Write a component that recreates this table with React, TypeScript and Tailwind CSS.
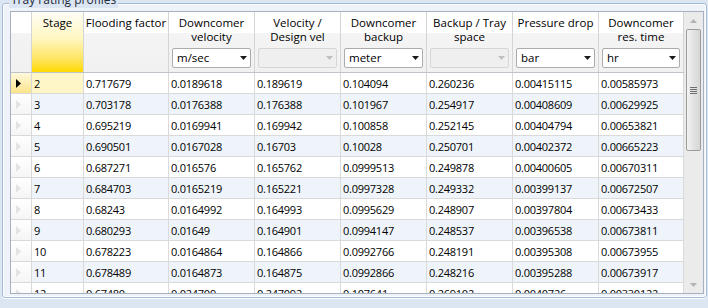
import React from 'react';

const rows: string[][] = [
  ['2', '0.717679', '0.0189618', '0.189619', '0.104094', '0.260236', '0.00415115', '0.00585973'],
  ['3', '0.703178', '0.0176388', '0.176388', '0.101967', '0.254917', '0.00408609', '0.00629925'],
  ['4', '0.695219', '0.0169941', '0.169942', '0.100858', '0.252145', '0.00404794', '0.00653821'],
  ['5', '0.690501', '0.0167028', '0.16703', '0.10028', '0.250701', '0.00402372', '0.00665223'],
  ['6', '0.687271', '0.016576', '0.165762', '0.0999513', '0.249878', '0.00400605', '0.00670311'],
  ['7', '0.684703', '0.0165219', '0.165221', '0.0997328', '0.249332', '0.00399137', '0.00672507'],
  ['8', '0.68243', '0.0164992', '0.164993', '0.0995629', '0.248907', '0.00397804', '0.00673433'],
  ['9', '0.680293', '0.01649', '0.164901', '0.0994147', '0.248537', '0.00396538', '0.00673811'],
  ['10', '0.678223', '0.0164864', '0.164866', '0.0992766', '0.248191', '0.00395308', '0.00673955'],
  ['11', '0.678489', '0.0164873', '0.164875', '0.0992866', '0.248216', '0.00395288', '0.00673917'],
  ['12', '0.67480', '0.024709', '0.247092', '0.107641', '0.269102', '0.0040726', '0.00330122'],
];

type Col = { title: string[]; combo?: string; disabled?: boolean; stage?: boolean };

const cols: Col[] = [
  { title: ['Stage'], stage: true },
  { title: ['Flooding factor'] },
  { title: ['Downcomer', 'velocity'], combo: 'm/sec' },
  { title: ['Velocity /', 'Design vel'], disabled: true },
  { title: ['Downcomer', 'backup'], combo: 'meter' },
  { title: ['Backup / Tray', 'space'], disabled: true },
  { title: ['Pressure drop'], combo: 'bar' },
  { title: ['Downcomer', 'res. time'], combo: 'hr' },
];

const gridCols = 'grid grid-cols-[21px_52px_85px_86px_86px_86px_86px_86px_85px]';

function Combo({ value, disabled }: { value?: string; disabled?: boolean }) {
  return (
    <div
      className={`mx-[3px] mb-[4px] mt-auto flex h-[20px] items-center rounded-[2px] border ${
        disabled ? 'border-[#d6d6d6] bg-[#efefef]' : 'border-[#acacac] bg-white'
      }`}
    >
      <span className="flex-1 pl-[4px] text-left text-[11.5px] leading-[18px] text-black">{value}</span>
      <svg width="7" height="4" viewBox="0 0 7 4" className="mr-[3px]">
        <path d="M0 0H7L3.5 4Z" fill={disabled ? '#c0c0c0' : '#1a1a1a'} />
      </svg>
    </div>
  );
}

function RowArrow({ active }: { active: boolean }) {
  return (
    <svg width="5" height="9" viewBox="0 0 5 9" className="ml-[5px]">
      <path d="M0 0L5 4.5L0 9Z" fill={active ? '#000' : '#e3e3e3'} />
    </svg>
  );
}

export default function App() {
  return (
    <div className="relative h-[308px] w-[708px] overflow-hidden bg-[#dbe6f2] pt-[3px] font-['Open_Sans',sans-serif] text-black">
      <div className="relative ml-[2px] h-[295px] w-[705px] rounded-[3px] border border-[#a3bbd6] bg-[#eef3f9] pl-[7px] pr-[2px] pt-[7px] pb-[3px] shadow-[inset_0_0_0_1px_#ffffff,0_1px_0_#ffffff]">
        <span className="absolute left-[6px] top-[-12px] bg-[#dbe6f2] px-[2px] text-[12px] leading-[16px] text-[#1e2a3d]">
          Tray rating profiles
        </span>
        <div className="flex h-[283px] w-[694px] border border-[#a5b1c0] bg-white">
          <div className="flex w-[673px] flex-col">
            <div className={`${gridCols} h-[61px] border-b border-[#bfc4cb]`}>
              <div className="h-[60px] border-r border-[#d5d5d5] bg-[linear-gradient(to_bottom,#ffffff_0%,#ffffff_35%,#f3f3f3_36%,#f1f1f1_100%)]" />
              {cols.map((c, i) => (
                <div
                  key={i}
                  className={`flex h-[60px] flex-col border-r border-[#d5d5d5] pt-[4px] text-center text-[11.5px] leading-[14px] ${
                    c.stage
                      ? 'bg-[linear-gradient(to_bottom,#fffef6_0%,#fff6c0_45%,#ffe45a_80%,#ffd800_100%)]'
                      : 'bg-[linear-gradient(to_bottom,#ffffff_0%,#ffffff_35%,#f4f4f4_36%,#f1f1f1_100%)]'
                  }`}
                >
                  {c.title.map((t, j) => (
                    <div key={j} className="whitespace-nowrap">
                      {t}
                    </div>
                  ))}
                  {(c.combo || c.disabled) && <Combo value={c.combo} disabled={c.disabled} />}
                </div>
              ))}
            </div>
            <div className="h-[220px] overflow-hidden">
              {rows.map((r, ri) => {
                const active = ri === 0;
                const alt = ri % 2 === 1;
                return (
                  <div key={ri} className={`${gridCols} h-[21px]`}>
                    <div
                      className={`flex h-[21px] items-center border-b border-r border-[#d9d9d9] ${
                        active
                          ? 'bg-[linear-gradient(to_bottom,#fff9dc,#fbe48a)]'
                          : 'bg-[linear-gradient(to_bottom,#ffffff,#f5f5f5)]'
                      }`}
                    >
                      <RowArrow active={active} />
                    </div>
                    {r.map((v, ci) => (
                      <div
                        key={ci}
                        className={`h-[21px] overflow-hidden whitespace-nowrap border-b border-r border-[#dadada] pl-[2px] pt-[2px] text-[11px] leading-[18px] tracking-[-0.25px] ${
                          active && ci === 0 ? 'bg-[#fff6c8]' : alt ? 'bg-[#eff4fa]' : 'bg-white'
                        }`}
                      >
                        {v}
                      </div>
                    ))}
                  </div>
                );
              })}
            </div>
          </div>
          <div className="flex h-[281px] w-[19px] flex-col bg-[#ebebeb]">
            <div className="flex h-[17px] items-center justify-center">
              <svg width="7" height="4" viewBox="0 0 7 4">
                <path d="M0 4H7L3.5 0Z" fill="#b4b4b4" />
              </svg>
            </div>
            <div className="mx-[2px] flex h-[122px] flex-col items-center justify-center gap-[1px] rounded-[2px] border border-[#9c9c9c] bg-[linear-gradient(to_right,#f3f3f3,#e2e2e2_50%,#d6d6d6)]">
              <div className="h-[1px] w-[7px] bg-[#6f6f6f]" />
              <div className="h-[1px] w-[7px] bg-[#6f6f6f]" />
              <div className="h-[1px] w-[7px] bg-[#6f6f6f]" />
              <div className="h-[1px] w-[7px] bg-[#6f6f6f]" />
            </div>
            <div className="flex-1" />
            <div className="flex h-[17px] items-center justify-center">
              <svg width="7" height="4" viewBox="0 0 7 4">
                <path d="M0 0H7L3.5 4Z" fill="#b4b4b4" />
              </svg>
            </div>
          </div>
        </div>
      </div>
    </div>
  );
}
